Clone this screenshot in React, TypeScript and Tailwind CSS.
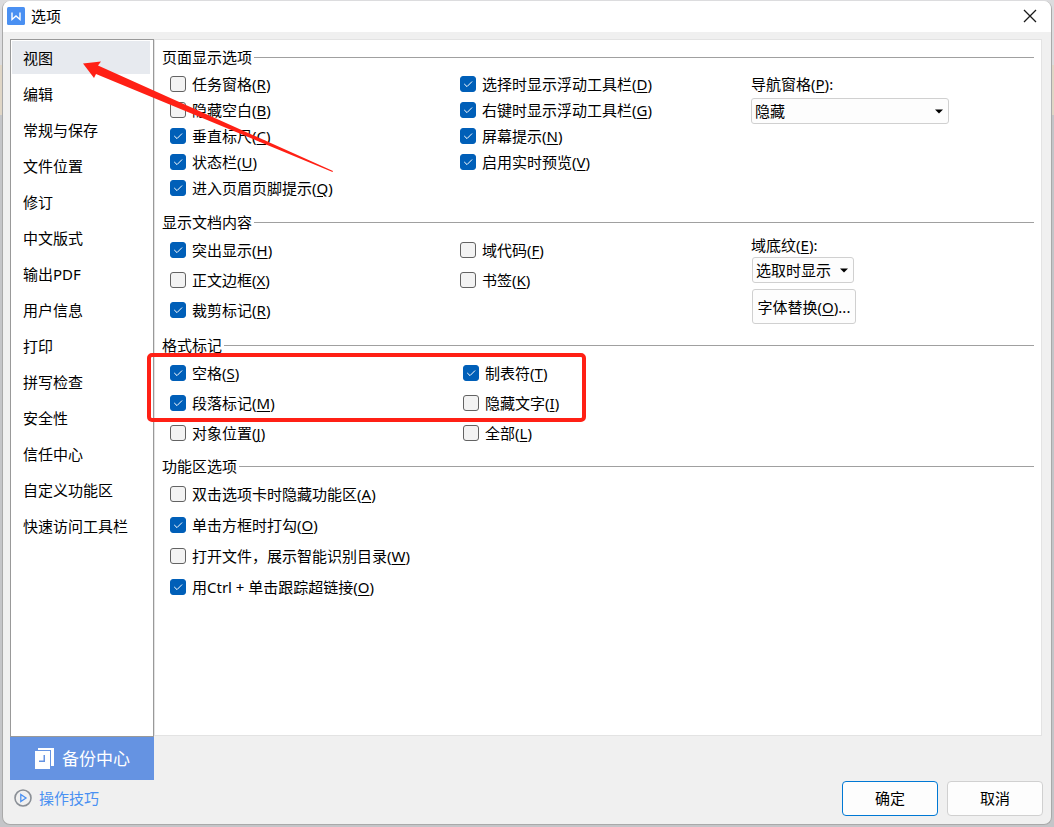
import { useId, useState, type ReactNode } from "react";

type Option = { text: string; accel: string; checked?: boolean };

const NAV_ITEMS = [
  "视图",
  "编辑",
  "常规与保存",
  "文件位置",
  "修订",
  "中文版式",
  "输出PDF",
  "用户信息",
  "打印",
  "拼写检查",
  "安全性",
  "信任中心",
  "自定义功能区",
  "快速访问工具栏",
];

const PAGE_LEFT: Option[] = [
  { text: "任务窗格", accel: "R" },
  { text: "隐藏空白", accel: "B" },
  { text: "垂直标尺", accel: "C", checked: true },
  { text: "状态栏", accel: "U", checked: true },
  { text: "进入页眉页脚提示", accel: "Q", checked: true },
];

const PAGE_RIGHT: Option[] = [
  { text: "选择时显示浮动工具栏", accel: "D", checked: true },
  { text: "右键时显示浮动工具栏", accel: "G", checked: true },
  { text: "屏幕提示", accel: "N", checked: true },
  { text: "启用实时预览", accel: "V", checked: true },
];

const CONTENT_LEFT: Option[] = [
  { text: "突出显示", accel: "H", checked: true },
  { text: "正文边框", accel: "X" },
  { text: "裁剪标记", accel: "R", checked: true },
];

const CONTENT_RIGHT: Option[] = [
  { text: "域代码", accel: "F" },
  { text: "书签", accel: "K" },
];

const MARKS_LEFT: Option[] = [
  { text: "空格", accel: "S", checked: true },
  { text: "段落标记", accel: "M", checked: true },
  { text: "对象位置", accel: "J" },
];

const MARKS_RIGHT: Option[] = [
  { text: "制表符", accel: "T", checked: true },
  { text: "隐藏文字", accel: "I" },
  { text: "全部", accel: "L" },
];

const RIBBON: Option[] = [
  { text: "双击选项卡时隐藏功能区", accel: "A" },
  { text: "单击方框时打勾", accel: "O", checked: true },
  { text: "打开文件，展示智能识别目录", accel: "W" },
  { text: "用Ctrl + 单击跟踪超链接", accel: "O", checked: true },
];

// Label text followed by its underlined access key, e.g. 状态栏(U)
function Accel({ text, accel }: { text: string; accel: string }) {
  return (
    <span>
      {text}(<span className="underline underline-offset-2">{accel}</span>)
    </span>
  );
}

function CheckOption({ option, rowClass }: { option: Option; rowClass: string }) {
  const id = useId();
  return (
    <li className={`flex items-center ${rowClass}`}>
      <span className="relative mr-1.5 size-4 shrink-0">
        <input
          id={id}
          type="checkbox"
          defaultChecked={option.checked}
          className="peer block size-4 appearance-none rounded-[3px] border border-[#636363] bg-[#f3f3f3] checked:border-[#005fb8] checked:bg-[#005fb8]"
        />
        <svg
          viewBox="0 0 16 16"
          className="pointer-events-none absolute inset-0 hidden size-4 peer-checked:block"
          fill="none"
          stroke="#fff"
          strokeLinecap="round"
        >
          <path d="M4.5 8.2 7 10.6l4.8-4.8" />
        </svg>
      </span>
      <label htmlFor={id} className="whitespace-nowrap">
        <Accel text={option.text} accel={option.accel} />
      </label>
    </li>
  );
}

function OptionList({ options, rowClass }: { options: Option[]; rowClass: string }) {
  return (
    <ul>
      {options.map((o) => (
        <CheckOption key={o.text} option={o} rowClass={rowClass} />
      ))}
    </ul>
  );
}

function Section({ title, className, children }: { title: string; className: string; children: ReactNode }) {
  return (
    <section>
      <h2 className="flex items-center gap-0.5 leading-5">
        {title}
        <span className="h-px flex-1 bg-[#a0a0a0]" />
      </h2>
      <div className={`pl-2 ${className}`}>{children}</div>
    </section>
  );
}

function Dropdown({ id, value, className }: { id: string; value: string; className: string }) {
  return (
    <div className={`relative ${className}`}>
      <select
        id={id}
        defaultValue={value}
        className="block h-[26px] w-full appearance-none rounded-[3px] border border-[#d0d0d0] bg-[#fdfdfd] pl-[3px] leading-5"
      >
        <option>{value}</option>
      </select>
      <svg viewBox="0 0 8 5" className="pointer-events-none absolute top-[11px] right-1.5 h-[5px] w-2">
        <path d="M0 0.5h8L4 4.5z" />
      </svg>
    </div>
  );
}

function TitleBar() {
  return (
    <header className="flex h-[31px] items-center bg-white pr-[14px] pb-0.5 pl-1">
      <svg viewBox="0 0 18 18" className="mr-1.5 size-[18px]">
        <rect width="18" height="18" rx="1.5" fill="#4a90f2" />
        <path d="M5 5.500v7l4-3.500 4 3.500v-7" fill="none" stroke="#fff" strokeWidth="1.4" />
      </svg>
      <h1 className="flex-1">选项</h1>
      <button type="button" aria-label="关闭">
        <svg viewBox="0 0 14 14" className="size-[14px]" stroke="#1a1a1a" strokeWidth="1.3">
          <path d="M1 1l12 12M13 1L1 13" />
        </svg>
      </button>
    </header>
  );
}

function Sidebar() {
  const [active, setActive] = useState(NAV_ITEMS[0]);
  return (
    <div className="flex w-36 shrink-0 flex-col">
      <nav className="flex flex-1 flex-col gap-[3px] border border-[#999] bg-white py-px pr-[3px] pl-px">
        {NAV_ITEMS.map((item) => (
          <button
            key={item}
            type="button"
            onClick={() => setActive(item)}
            className={`h-[33px] pl-[11px] text-left ${item === active ? "bg-[#e7eaef]" : ""}`}
          >
            {item}
          </button>
        ))}
      </nav>
      <button
        type="button"
        className="flex h-[43px] items-center gap-2 bg-[#6593e2] pl-[25px] text-[17px] text-white"
      >
        <svg viewBox="0 0 19 21" className="h-[21px] w-[19px]" fill="#fff">
          <path d="M3 0h16v18h-3V2H3z" />
          <path fillRule="evenodd" d="M0 3h15v18H0zM8.500 7v5.500H4V14h6V7z" />
        </svg>
        备份中心
      </button>
    </div>
  );
}

function Panel() {
  return (
    <div className="min-w-0 flex-1 border border-[#e3e3e3] bg-white px-[7px] pt-[7px]">
      <Section title="页面显示选项" className="pt-1 pb-[11px]">
        <div className="grid grid-cols-[290px_291px_1fr]">
          <OptionList options={PAGE_LEFT} rowClass="h-[26px]" />
          <OptionList options={PAGE_RIGHT} rowClass="h-[26px]" />
          <div>
            <label htmlFor="nav-pane" className="block leading-[27px]">
              <Accel text="导航窗格" accel="P" />:
            </label>
            <Dropdown id="nav-pane" value="隐藏" className="w-[198px]" />
          </div>
        </div>
      </Section>

      <Section title="显示文档内容" className="pt-[3px] pb-2.5">
        <div className="grid grid-cols-[290px_291px_1fr]">
          <OptionList options={CONTENT_LEFT} rowClass="h-[30px]" />
          <OptionList options={CONTENT_RIGHT} rowClass="h-[30px]" />
          <div>
            <label htmlFor="field-shading" className="block pb-0.5 leading-5">
              <Accel text="域底纹" accel="E" />:
            </label>
            <div className="flex flex-col items-start gap-1.5 pl-px">
              <Dropdown id="field-shading" value="选取时显示" className="w-[102px]" />
              <button
                type="button"
                className="h-[35px] w-[104px] rounded-[3px] border border-[#d0d0d0] bg-[#fdfdfd] whitespace-nowrap"
              >
                <Accel text="字体替换" accel="O" />...
              </button>
            </div>
          </div>
        </div>
      </Section>

      <Section title="格式标记" className="pt-[3px] pb-2">
        <div className="grid grid-cols-[293px_1fr]">
          <OptionList options={MARKS_LEFT} rowClass="h-[30px]" />
          <OptionList options={MARKS_RIGHT} rowClass="h-[30px]" />
        </div>
      </Section>

      <Section title="功能区选项" className="pt-0.5">
        <OptionList options={RIBBON} rowClass="h-[31px]" />
      </Section>
    </div>
  );
}

// Red arrow and frame drawn over the dialog
function Annotations() {
  return (
    <>
      <svg
        viewBox="0 0 252 112"
        className="pointer-events-none absolute top-[61px] left-[82px] h-[112px] w-[252px]"
        fill="#ff2015"
      >
        <path d="M1 2.500 19 0.500 16 4.500 251 110 250.500 111 14 13 12 17z" />
      </svg>
      <div className="pointer-events-none absolute top-[353px] left-[147px] h-[69px] w-[439px] rounded-[5px] border-4 border-[#ff2015]" />
    </>
  );
}

export default function App() {
  return (
    <div className="relative flex min-h-screen flex-col bg-[#c4c5c8] px-0.5 pt-px pb-0.5 font-['Noto_Sans','Noto_Sans_CJK_SC',sans-serif] text-[15px] leading-5 text-black">
      {/* slice of the document window showing behind the dialog */}
      <div className="absolute inset-x-0 top-0 h-[65px] bg-[#dcdcde]" />
      <div className="absolute inset-x-0 top-[65px] h-[50px] bg-[#e0d6c6]" />
      <main className="relative flex flex-1 flex-col overflow-hidden rounded-lg border border-t-0 border-[#a9a9a9] bg-[#f0f0f0]">
        <TitleBar />
        <div className="flex flex-1 pt-[7px] pr-[9px] pl-[7px]">
          <Sidebar />
          <div className="flex min-w-0 flex-1 flex-col pb-11">
            <Panel />
          </div>
        </div>
        <footer className="flex h-11 items-start justify-between pr-2 pl-[11px]">
          <a href="#tips" className="flex h-9 items-center gap-[7px] text-[#4a90f2]">
            <svg viewBox="0 0 18 18" className="size-[18px]" fill="none">
              <circle cx="9" cy="9" r="8" stroke="#8a8f96" strokeWidth="1.6" />
              <path d="M6.800 5.500v7L12 9z" stroke="#4a90f2" strokeWidth="1.3" />
            </svg>
            操作技巧
          </a>
          <div className="flex gap-[9px] pt-px">
            <button type="button" className="h-[35px] w-24 rounded-[4px] border border-[#0078d4] bg-[#fdfdfd] pb-0.5">
              确定
            </button>
            <button type="button" className="h-[35px] w-24 rounded-[4px] border border-[#d0d0d0] bg-[#fdfdfd] pb-0.5">
              取消
            </button>
          </div>
        </footer>
      </main>
      <Annotations />
    </div>
  );
}
